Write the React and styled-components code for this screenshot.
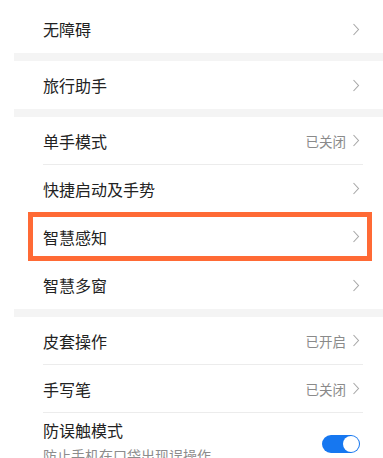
import React from 'react';
import styled, { createGlobalStyle } from 'styled-components';

const GlobalStyle = createGlobalStyle`
	body {
		margin: 0;
		background: #fff;
		font-family: 'Noto Sans CJK SC', 'Noto Sans', sans-serif;
		overflow: hidden;
	}
`;

const Page = styled.div`
	width: 383px;
	height: 458px;
	overflow: hidden;
	padding: 5px 0 0 14px;
	box-sizing: border-box;
`;

const Section = styled.div`
	background: #fff;
`;

const Band = styled.div`
	height: 8px;
	background: #f4f4f4;
`;

const Row = styled.div`
	position: relative;
	display: flex;
	align-items: center;
	justify-content: space-between;
	height: ${({ tall }) => (tall ? '60px' : '48px')};
	margin: 0 20px 0 29px;
	padding-right: 3px;
	box-sizing: border-box;
	border-bottom: ${({ last }) => (last ? 'none' : '1px solid #ececec')};

	${({ highlight }) =>
		highlight &&
		`
		&::after {
			content: '';
			position: absolute;
			left: -15px;
			right: -9px;
			top: -1px;
			bottom: -1px;
			border: 5px solid #ff6a35;
		}
	`}
`;

const Texts = styled.div`
	display: flex;
	flex-direction: column;
	align-self: flex-start;
	padding-top: 7px;
`;

const Title = styled.span`
	font-size: 16px;
	color: #222;
	line-height: 20px;
`;

const Sub = styled.span`
	font-size: 14px;
	color: #8c8c8c;
	line-height: 18px;
	margin-top: 6px;
	white-space: nowrap;
`;

const Right = styled.div`
	display: flex;
	align-items: center;
	gap: 6px;
`;

const Value = styled.span`
	font-size: 13.5px;
	color: #8a8a8a;
`;

const Toggle = styled.div`
	width: 38px;
	height: 18px;
	border-radius: 9px;
	background: #1677f0;
	display: flex;
	align-items: center;
	justify-content: flex-end;
	padding: 1px;
	box-sizing: border-box;
	margin-top: 2px;
	&::before {
		content: '';
		width: 16px;
		height: 16px;
		border-radius: 50%;
		background: #fff;
	}
`;

const Chevron = () => (
	<svg width="8" height="13" viewBox="0 0 8 13">
		<polyline points="1.5,1 6.5,6.5 1.5,12" fill="none" stroke="#a8a8a8" strokeWidth="1.1" />
	</svg>
);

const Item = ({ title, value, last, highlight }) => (
	<Row last={last} highlight={highlight}>
		<Title>{title}</Title>
		<Right>
			{value && <Value>{value}</Value>}
			<Chevron />
		</Right>
	</Row>
);

export default function App() {
	return (
		<>
			<GlobalStyle />
			<Page>
				<Section>
					<Item title="无障碍" last />
				</Section>
				<Band />
				<Section>
					<Item title="旅行助手" last />
				</Section>
				<Band />
				<Section>
					<Item title="单手模式" value="已关闭" />
					<Item title="快捷启动及手势" />
					<Item title="智慧感知" highlight />
					<Item title="智慧多窗" last />
				</Section>
				<Band />
				<Section>
					<Item title="皮套操作" value="已开启" />
					<Item title="手写笔" value="已关闭" />
					<Row tall last>
						<Texts>
							<Title>防误触模式</Title>
							<Sub>防止手机在口袋出现误操作</Sub>
						</Texts>
						<Toggle />
					</Row>
				</Section>
			</Page>
		</>
	);
}
